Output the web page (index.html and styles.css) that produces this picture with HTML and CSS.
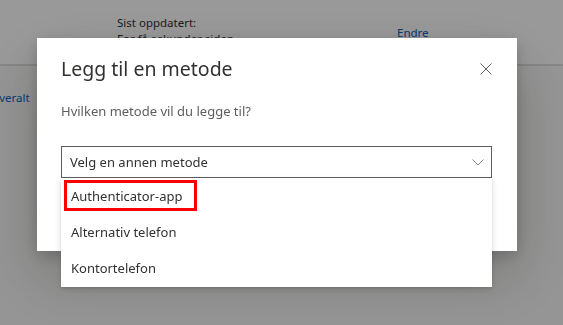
FILE: index.html
```html
<!DOCTYPE html>
<html lang="nb">
<head>
    <meta charset="UTF-8">
    <meta name="viewport" content="width=device-width, initial-scale=1.0">
    <title>Sikkerhetsinformasjon</title>
    <link rel="stylesheet" href="styles.css">
</head>
<body>
    <div class="page">
        <div class="page-top">
            <div class="last-updated">
                <div>Sist oppdatert:</div>
                <div>For få sekunder siden</div>
            </div>
            <a class="page-link page-link-top" href="#">Endre</a>
        </div>
        <div class="page-body">
            <a class="page-link signout" href="#">Logg av overalt</a>
        </div>
    </div>

    <div class="overlay">
        <div class="modal">
            <div class="modal-header">
                <h1 class="modal-title">Legg til en metode</h1>
                <button class="modal-close" aria-label="Lukk">
                    <svg width="12" height="12" viewBox="0 0 12 12">
                        <path d="M0.5 0.5 L11.5 11.5 M11.5 0.5 L0.5 11.5" stroke="#605e5c" stroke-width="1" fill="none"/>
                    </svg>
                </button>
            </div>
            <p class="modal-subtitle">Hvilken metode vil du legge til?</p>

            <div class="select">
                <span class="select-value">Velg en annen metode</span>
                <svg class="select-chevron" width="12" height="7" viewBox="0 0 12 7">
                    <path d="M0.5 0.5 L6 6 L11.5 0.5" stroke="#8a8886" stroke-width="1" fill="none"/>
                </svg>
                <ul class="select-menu">
                    <li class="select-option is-marked">Authenticator-app</li>
                    <li class="select-option">Alternativ telefon</li>
                    <li class="select-option">Kontortelefon</li>
                </ul>
            </div>
        </div>
    </div>
</body>
</html>
```
FILE: styles.css
```css
:root {
    --text: #323130;
    --text-muted: #605e5c;
    --link: #0067b8;
    --border: #605e5c;
    --divider: #e1dfdd;
    --mark: #ff0000;
}

*,
*::before,
*::after {
    box-sizing: border-box;
    margin: 0;
    padding: 0;
}

body {
    font-family: 'Noto Sans', 'Open Sans', sans-serif;
    color: var(--text);
    background-color: white;
    overflow: hidden;
}

/* page behind the dialog */
.page {
    min-height: 100vh;
    background-color: #faf9f8;
}

.page-top {
    height: 66px;
    display: flex;
    align-items: center;
    padding: 0 0 2px 117px;
    background-color: white;
    border-bottom: 2px solid var(--divider);
    font-size: 11.5px;
    line-height: 16px;
}

.last-updated {
    width: 280px;
    color: var(--text);
}

.page-link {
    color: var(--link);
    text-decoration: none;
    font-size: 11.5px;
    line-height: 16px;
}

.page-link-top {
    margin-top: 3px;
}

.page-body {
    padding-top: 24px;
}

.signout {
    display: block;
    margin-left: -53px;
    white-space: nowrap;
}

/* dialog */
.overlay {
    position: fixed;
    inset: 0;
    background-color: rgba(0, 0, 0, 0.4);
    padding: 38px 0 0 37px;
}

.modal {
    width: 480px;
    height: 213px;
    background-color: white;
    padding: 17px 25px 0 24px;
    box-shadow: 0 25.6px 57.6px rgba(0, 0, 0, 0.22), 0 4.8px 14.4px rgba(0, 0, 0, 0.18);
}

.modal-header {
    display: flex;
    justify-content: space-between;
    align-items: center;
}

.modal-title {
    font-size: 19.5px;
    font-weight: 400;
    line-height: 28px;
    color: var(--text);
}

.modal-close {
    display: flex;
    width: 12px;
    height: 12px;
    border: none;
    background: none;
    cursor: pointer;
}

.modal-subtitle {
    margin-top: 18px;
    font-size: 13px;
    line-height: 20px;
    color: var(--text-muted);
}

.select {
    position: relative;
    margin-top: 25px;
    height: 32px;
    display: flex;
    align-items: center;
    justify-content: space-between;
    padding: 0 7px 0 8px;
    border: 1px solid var(--border);
    font-size: 13px;
    line-height: 20px;
}

.select-value {
    color: var(--text);
}

.select-chevron {
    margin-top: 1px;
}

.select-menu {
    position: absolute;
    top: calc(100% + 1px);
    left: -1px;
    right: -1px;
    list-style: none;
    background-color: white;
    padding-bottom: 1px;
    box-shadow: 0 3.2px 7.2px rgba(0, 0, 0, 0.13), 0 0.6px 1.8px rgba(0, 0, 0, 0.11);
}

.select-option {
    position: relative;
    height: 36px;
    padding-left: 10px;
    line-height: 36px;
    color: var(--text);
}

/* red highlight drawn around the first option */
.select-option.is-marked::after {
    content: '';
    position: absolute;
    left: 3px;
    top: 2px;
    width: 133px;
    height: 31px;
    border: 3px solid var(--mark);
}
```
